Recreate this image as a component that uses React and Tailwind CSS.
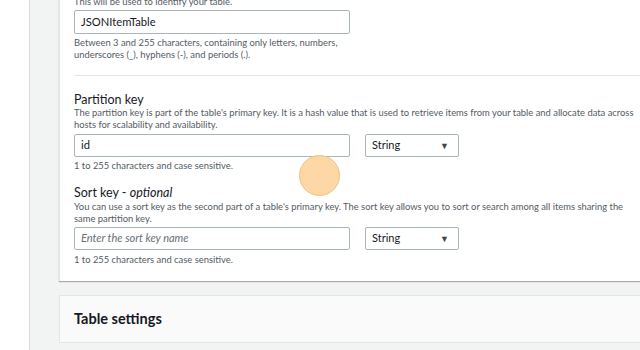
import React from 'react';

const font = { fontFamily: 'Lato, "Open Sans", "Liberation Sans", sans-serif' };

const Select = () => (
    <div className="w-[94px] h-[23px] border border-[#aab7b8] rounded-[2px] flex items-center justify-between pl-[6px] pr-[9px] text-[11px] text-[#16191f]">
        <span>String</span>
        <span className="text-[9px] text-[#444]">▼</span>
    </div>
);

const App = () => {
    return (
        <div className="w-[640px] h-[350px] overflow-hidden flex bg-white relative" style={font}>
            {/* left rail */}
            <div className="w-[30px] shrink-0 bg-white border-r border-[#d5dbdb]" />

            {/* main area */}
            <div className="flex-1 bg-[#f2f3f3] pl-[29px]">
                {/* Table details card */}
                <div className="bg-white w-[620px] -mt-[4px] pl-[14px] pb-[15px] shadow-[0_1px_1px_rgba(0,0,0,0.3)] border-l border-[#e3e6e6]">
                    <p className="text-[9.4px] leading-[12px] text-[#545b64]">This will be used to identify your table.</p>
                    <div className="mt-[2px] w-[276px] h-[24px] border border-[#aab7b8] rounded-[2px] flex items-center px-[6px] text-[11.2px] text-[#16191f]">
                        JSONItemTable
                    </div>
                    <p className="mt-[3px] text-[9.4px] leading-[11.5px] text-[#545b64]">
                        Between 3 and 255 characters, containing only letters, numbers,<br />
                        underscores (_), hyphens (-), and periods (.).
                    </p>

                    <div className="mt-[15px] border-t border-[#e3e6e6]" />

                    {/* Partition key */}
                    <p className="mt-[17px] text-[12.5px] leading-[14px] text-[#16191f]">Partition key</p>
                    <p className="text-[9.4px] leading-[12px] text-[#545b64] whitespace-nowrap">
                        The partition key is part of the table's primary key. It is a hash value that is used to retrieve items from your table and allocate data across<br />
                        hosts for scalability and availability.
                    </p>
                    <div className="mt-[3px] flex items-center gap-[15px]">
                        <div className="w-[276px] h-[23px] border border-[#aab7b8] rounded-[2px] flex items-center px-[6px] text-[11.2px] text-[#16191f]">
                            id
                        </div>
                        <Select />
                    </div>
                    <p className="mt-[3px] text-[9.4px] leading-[12px] text-[#545b64]">1 to 255 characters and case sensitive.</p>

                    {/* Sort key */}
                    <p className="mt-[14px] text-[12.5px] leading-[14px] text-[#16191f]">
                        Sort key - <span className="italic">optional</span>
                    </p>
                    <p className="mt-[1px] text-[9.4px] leading-[12px] text-[#545b64] whitespace-nowrap">
                        You can use a sort key as the second part of a table's primary key. The sort key allows you to sort or search among all items sharing the<br />
                        same partition key.
                    </p>
                    <div className="mt-[2px] flex items-center gap-[15px]">
                        <div className="w-[276px] h-[23px] border border-[#aab7b8] rounded-[2px] flex items-center px-[6px] text-[11px] italic text-[#687078]">
                            Enter the sort key name
                        </div>
                        <Select />
                    </div>
                    <p className="mt-[4px] text-[9.4px] leading-[12px] text-[#545b64]">1 to 255 characters and case sensitive.</p>
                </div>

                {/* Table settings card */}
                <div className="mt-[14px] w-[620px] bg-white border-l border-t border-[#e3e6e6]">
                    <div className="h-[47px] bg-[#fafafa] border-b border-[#e3e6e6] flex items-center pl-[14px]">
                        <h3 className="text-[14.5px] font-bold text-[#16191f]">Table settings</h3>
                    </div>
                </div>
            </div>

            {/* click highlight */}
            <div className="absolute left-[299px] top-[155px] w-[41px] h-[41px] rounded-full bg-[#fdd39c]/90 border border-[#f3c27f]" />
        </div>
    );
};

export default App;
